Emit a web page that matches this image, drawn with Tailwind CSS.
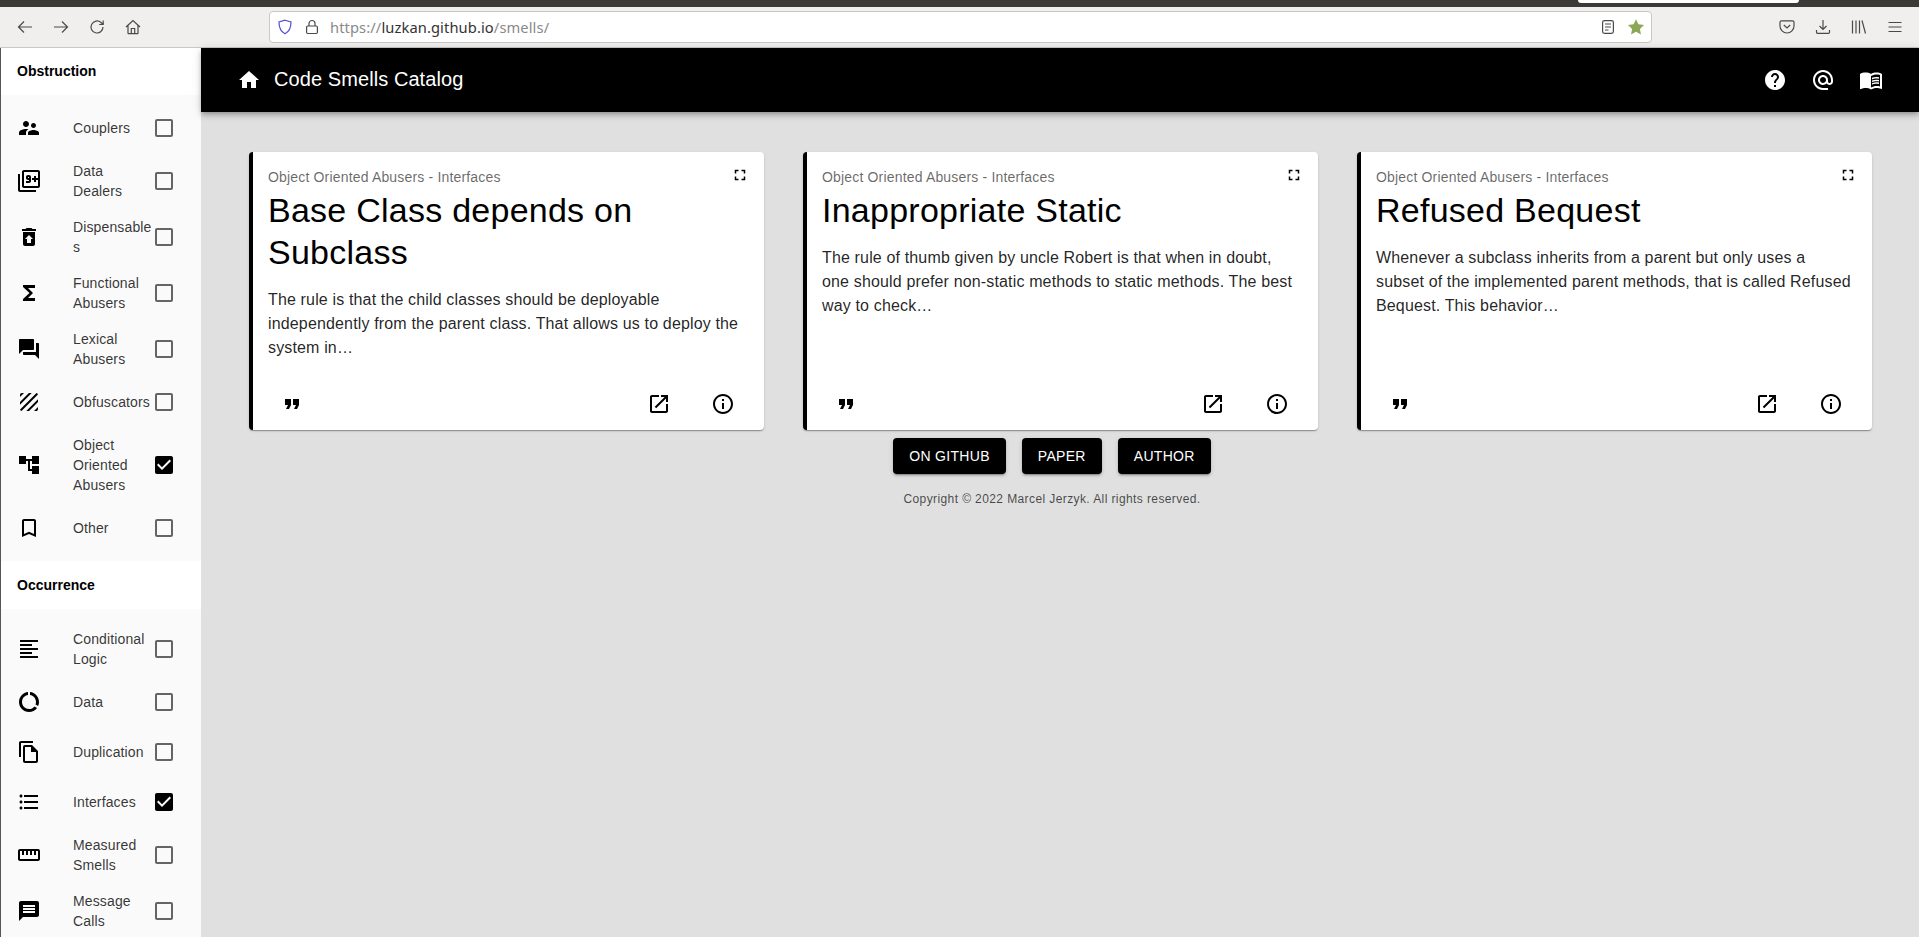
<!DOCTYPE html>
<html lang="en">
<head>
<meta charset="UTF-8" />
<title>Code Smells Catalog</title>
<script src="https://cdn.jsdelivr.net/npm/@tailwindcss/browser@4"></script>
</head>
<body class="h-screen overflow-hidden flex flex-col bg-[#e0e0e0] font-['Liberation_Sans',Arial,sans-serif]">

  <!-- Browser chrome -->
  <div class="h-[7px] shrink-0 bg-[#3c3a36] flex pl-[1578px]">
    <div class="w-[221px] h-[3px] bg-white rounded-b-[3px]"></div>
  </div>
  <div class="h-[41px] shrink-0 bg-[#f0efed] border-b border-[#c8c8c8] flex items-center text-[#4a4a4a]">
    <div class="flex items-center gap-[20px] pl-[17px] w-[269px]">
      <svg class="w-4 h-4" viewBox="0 0 16 16" fill="none" stroke="currentColor" stroke-width="1.2"><path d="M15 8H1.5M7 2.5 1.5 8 7 13.5"/></svg>
      <svg class="w-4 h-4" viewBox="0 0 16 16" fill="none" stroke="currentColor" stroke-width="1.2"><path d="M1 8h13.5M9 2.5 14.5 8 9 13.5"/></svg>
      <svg class="w-4 h-4" viewBox="0 0 16 16" fill="none" stroke="currentColor" stroke-width="1.2"><path d="M14 8a6 6 0 1 1-2-4.5L14 5.5M14.2 1.5v4h-4"/></svg>
      <svg class="w-4 h-4" viewBox="0 0 16 16" fill="none" stroke="currentColor" stroke-width="1.2"><path d="M1 8 8 1.5 15 8M3 6.5V14a.7.7 0 0 0 .7.7h8.6A.7.7 0 0 0 13 14V6.5M6.3 14.5V9.5h3.4v5"/></svg>
    </div>
    <div class="w-[1383px] h-[32px] bg-white border border-[#c8c8c8] rounded-[4px] flex items-center pl-[7px] pr-[6px]">
      <svg class="w-4 h-4 text-[#4f4fd8]" viewBox="0 0 16 16" fill="none" stroke="currentColor" stroke-width="1.2"><path d="M8 1.2 14 3c0 6-1.5 9.5-6 11.8C3.5 12.5 2 9 2 3z"/></svg>
      <svg class="w-4 h-4 ml-[11px]" viewBox="0 0 16 16" fill="none" stroke="currentColor" stroke-width="1.2"><rect x="2.6" y="7" width="10.8" height="7.5" rx="1.2"/><path d="M5 7V4.5a3 3 0 0 1 6 0V7"/></svg>
      <span class="ml-[10px] text-[14.7px] font-['Noto_Sans',sans-serif] text-[#8a8a8a] tracking-[0.1px]">https://<span class="text-[#333]">luzkan.github.io</span>/smells/</span>
      <svg class="w-4 h-4 ml-auto" viewBox="0 0 16 16" fill="none" stroke="currentColor" stroke-width="1.2"><rect x="2.6" y="1.6" width="10.8" height="12.8" rx="1.8"/><path d="M5 5h6M5 8h6M5 11h3.5"/></svg>
      <svg class="w-[18px] h-[18px] ml-[11px] text-[#8aa856]" viewBox="0 0 24 24" fill="currentColor"><path d="M12 1.5l3.2 6.9 7.5.9-5.5 5.2 1.4 7.5L12 18.3l-6.6 3.7 1.4-7.5L1.3 9.3l7.5-.9z"/></svg>
    </div>
    <div class="flex items-center gap-[20px] ml-[127px]">
      <svg class="w-4 h-4" viewBox="0 0 16 16" fill="none" stroke="currentColor" stroke-width="1.2"><path d="M2.5 1.8h11A1.5 1.5 0 0 1 15 3.3V7A7 7 0 0 1 1 7V3.3a1.5 1.5 0 0 1 1.5-1.5zM4.8 6 8 9l3.2-3"/></svg>
      <svg class="w-4 h-4" viewBox="0 0 16 16" fill="none" stroke="currentColor" stroke-width="1.2"><path d="M8 1v9.5M4.5 7 8 10.5 11.5 7M1.5 11v2.3a1 1 0 0 0 1 1h11a1 1 0 0 0 1-1V11"/></svg>
      <svg class="w-4 h-4" viewBox="0 0 16 16" fill="none" stroke="currentColor" stroke-width="1.2"><path d="M1.5 1.5v13M5 1.5v13M8.5 1.5v13M11 1.5l3.5 13"/></svg>
      <svg class="w-4 h-4" viewBox="0 0 16 16" fill="none" stroke="currentColor" stroke-width="1.2"><path d="M1.5 3.5h13M1.5 8h13M1.5 12.5h13"/></svg>
    </div>
  </div>

  <!-- Page -->
  <div class="flex-1 min-h-0 flex border-l border-[#555]">

    <!-- Sidebar -->
    <aside class="w-[200px] shrink-0 bg-white overflow-hidden text-[14px] leading-[20px] tracking-[0.13px] text-black/80">
      <h2 class="h-[47px] flex items-center pl-[16px] pb-[2px] font-bold text-black tracking-normal">Obstruction</h2>
      <ul class="bg-[#fafafa] py-2">
        <li class="min-h-[50px] py-2 pl-[16px] flex items-center">
          <svg class="w-6 h-6 mr-[32px] shrink-0" viewBox="0 0 24 24"><path d="M16.5 12c1.38 0 2.49-1.12 2.49-2.5S17.88 7 16.5 7C15.12 7 14 8.12 14 9.5s1.12 2.5 2.5 2.5zM9 11c1.66 0 2.99-1.34 2.99-3S10.66 5 9 5C7.34 5 6 6.34 6 8s1.34 3 3 3zm7.5 3c-1.83 0-5.5.92-5.5 2.75V19h11v-2.25c0-1.83-3.67-2.75-5.5-2.75zM9 13c-2.33 0-7 1.17-7 3.5V19h7v-2.25c0-.85.33-2.34 2.37-3.47C10.5 13.1 9.66 13 9 13z"/></svg>
          <span class="w-[79px] [overflow-wrap:anywhere]">Couplers</span>
          <svg class="w-6 h-6 shrink-0 text-black/60" viewBox="0 0 24 24" fill="currentColor"><path d="M19 5v14H5V5h14m0-2H5c-1.1 0-2 .9-2 2v14c0 1.1.9 2 2 2h14c1.1 0 2-.9 2-2V5c0-1.1-.9-2-2-2z"/></svg>
        </li>
        <li class="min-h-[50px] py-2 pl-[16px] flex items-center">
          <svg class="w-6 h-6 mr-[32px] shrink-0" viewBox="0 0 24 24"><path d="M3 5H1v16c0 1.1.9 2 2 2h16v-2H3V5zm11 7V8c0-1.1-.9-2-2-2h-1c-1.1 0-2 .9-2 2v1c0 1.1.9 2 2 2h1v1H9v2h3c1.1 0 2-.9 2-2zm-3-3V8h1v1h-1zm10-8H7c-1.1 0-2 .9-2 2v14c0 1.1.9 2 2 2h14c1.1 0 2-.9 2-2V3c0-1.1-.9-2-2-2zm0 8h-2V7h-2v2h-2v2h2v2h2v-2h2v6H7V3h14v6z"/></svg>
          <span class="w-[79px] [overflow-wrap:anywhere]">Data Dealers</span>
          <svg class="w-6 h-6 shrink-0 text-black/60" viewBox="0 0 24 24" fill="currentColor"><path d="M19 5v14H5V5h14m0-2H5c-1.1 0-2 .9-2 2v14c0 1.1.9 2 2 2h14c1.1 0 2-.9 2-2V5c0-1.1-.9-2-2-2z"/></svg>
        </li>
        <li class="min-h-[50px] py-2 pl-[16px] flex items-center">
          <svg class="w-6 h-6 mr-[32px] shrink-0" viewBox="0 0 24 24"><path d="M19 4h-3.5l-1-1h-5l-1 1H5v2h14zM6 7v12c0 1.1.9 2 2 2h8c1.1 0 2-.9 2-2V7H6zm8 7v4h-4v-4H8l4-4 4 4h-2z"/></svg>
          <span class="w-[79px] [overflow-wrap:anywhere]">Dispensables</span>
          <svg class="w-6 h-6 shrink-0 text-black/60" viewBox="0 0 24 24" fill="currentColor"><path d="M19 5v14H5V5h14m0-2H5c-1.1 0-2 .9-2 2v14c0 1.1.9 2 2 2h14c1.1 0 2-.9 2-2V5c0-1.1-.9-2-2-2z"/></svg>
        </li>
        <li class="min-h-[50px] py-2 pl-[16px] flex items-center">
          <svg class="w-6 h-6 mr-[32px] shrink-0" viewBox="0 0 24 24"><path d="M18 4H6v2l6.5 6L6 18v2h12v-3h-7l5-5-5-5h7z"/></svg>
          <span class="w-[79px] [overflow-wrap:anywhere]">Functional Abusers</span>
          <svg class="w-6 h-6 shrink-0 text-black/60" viewBox="0 0 24 24" fill="currentColor"><path d="M19 5v14H5V5h14m0-2H5c-1.1 0-2 .9-2 2v14c0 1.1.9 2 2 2h14c1.1 0 2-.9 2-2V5c0-1.1-.9-2-2-2z"/></svg>
        </li>
        <li class="min-h-[50px] py-2 pl-[16px] flex items-center">
          <svg class="w-6 h-6 mr-[32px] shrink-0" viewBox="0 0 24 24"><path d="M21 6h-2v9H6v2c0 .55.45 1 1 1h11l4 4V7c0-.55-.45-1-1-1zm-4 6V3c0-.55-.45-1-1-1H3c-.55 0-1 .45-1 1v14l4-4h10c.55 0 1-.45 1-1z"/></svg>
          <span class="w-[79px] [overflow-wrap:anywhere]">Lexical Abusers</span>
          <svg class="w-6 h-6 shrink-0 text-black/60" viewBox="0 0 24 24" fill="currentColor"><path d="M19 5v14H5V5h14m0-2H5c-1.1 0-2 .9-2 2v14c0 1.1.9 2 2 2h14c1.1 0 2-.9 2-2V5c0-1.1-.9-2-2-2z"/></svg>
        </li>
        <li class="min-h-[50px] py-2 pl-[16px] flex items-center">
          <svg class="w-6 h-6 mr-[32px] shrink-0" viewBox="0 0 24 24"><path d="M19.51 3.08L3.08 19.51c.09.34.27.65.51.9.25.24.56.42.9.51L20.93 4.49c-.19-.69-.73-1.23-1.42-1.41zM11.88 3L3 11.88v2.83L14.71 3h-2.83zM5 3c-1.1 0-2 .9-2 2v2l4-4H5zm14 18c.55 0 1.05-.22 1.41-.59.37-.36.59-.86.59-1.41v-2l-4 4h2zm-9.71 0h2.83L21 12.12V9.29L9.29 21z"/></svg>
          <span class="w-[79px] [overflow-wrap:anywhere]">Obfuscators</span>
          <svg class="w-6 h-6 shrink-0 text-black/60" viewBox="0 0 24 24" fill="currentColor"><path d="M19 5v14H5V5h14m0-2H5c-1.1 0-2 .9-2 2v14c0 1.1.9 2 2 2h14c1.1 0 2-.9 2-2V5c0-1.1-.9-2-2-2z"/></svg>
        </li>
        <li class="min-h-[50px] py-2 pl-[16px] flex items-center">
          <svg class="w-6 h-6 mr-[32px] shrink-0" viewBox="0 0 24 24"><path d="M22 11V3h-7v3H9V3H2v8h7V8h2v10h4v3h7v-8h-7v3h-2V8h2v3z"/></svg>
          <span class="w-[79px] [overflow-wrap:anywhere]">Object Oriented Abusers</span>
          <svg class="w-6 h-6 shrink-0 text-black" viewBox="0 0 24 24" fill="currentColor"><path d="M19 3H5c-1.11 0-2 .9-2 2v14c0 1.1.89 2 2 2h14c1.11 0 2-.9 2-2V5c0-1.1-.89-2-2-2zm-9 14l-5-5 1.41-1.41L10 14.17l7.59-7.59L19 8l-9 9z"/></svg>
        </li>
        <li class="min-h-[50px] py-2 pl-[16px] flex items-center">
          <svg class="w-6 h-6 mr-[32px] shrink-0" viewBox="0 0 24 24"><path d="M17 3H7c-1.1 0-1.99.9-1.99 2L5 21l7-3 7 3V5c0-1.1-.9-2-2-2zm0 15l-5-2.18L7 18V5h10v13z"/></svg>
          <span class="w-[79px] [overflow-wrap:anywhere]">Other</span>
          <svg class="w-6 h-6 shrink-0 text-black/60" viewBox="0 0 24 24" fill="currentColor"><path d="M19 5v14H5V5h14m0-2H5c-1.1 0-2 .9-2 2v14c0 1.1.9 2 2 2h14c1.1 0 2-.9 2-2V5c0-1.1-.9-2-2-2z"/></svg>
        </li>
      </ul>
      <h2 class="h-[48px] flex items-center pl-[16px] font-bold text-black tracking-normal">Occurrence</h2>
      <ul class="bg-[#fafafa] pt-[12px] pb-2">
        <li class="min-h-[50px] py-2 pl-[16px] flex items-center">
          <svg class="w-6 h-6 mr-[32px] shrink-0" viewBox="0 0 24 24"><path d="M15 15H3v2h12v-2zm0-8H3v2h12V7zM3 13h18v-2H3v2zm0 8h18v-2H3v2zM3 3v2h18V3H3z"/></svg>
          <span class="w-[79px] [overflow-wrap:anywhere]">Conditional Logic</span>
          <svg class="w-6 h-6 shrink-0 text-black/60" viewBox="0 0 24 24" fill="currentColor"><path d="M19 5v14H5V5h14m0-2H5c-1.1 0-2 .9-2 2v14c0 1.1.9 2 2 2h14c1.1 0 2-.9 2-2V5c0-1.1-.9-2-2-2z"/></svg>
        </li>
        <li class="min-h-[50px] py-2 pl-[16px] flex items-center">
          <svg class="w-6 h-6 mr-[32px] shrink-0" viewBox="0 0 24 24"><path d="M13 2.05v3.03c3.39.49 6 3.39 6 6.92 0 .9-.18 1.75-.48 2.54l2.6 1.53c.56-1.24.88-2.62.88-4.07 0-5.18-3.95-9.45-9-9.95zM12 19c-3.87 0-7-3.13-7-7 0-3.53 2.61-6.43 6-6.92V2.05c-5.06.5-9 4.76-9 9.95 0 5.52 4.47 10 9.99 10 3.31 0 6.24-1.61 8.06-4.09l-2.6-1.53C16.17 17.98 14.21 19 12 19z"/></svg>
          <span class="w-[79px] [overflow-wrap:anywhere]">Data</span>
          <svg class="w-6 h-6 shrink-0 text-black/60" viewBox="0 0 24 24" fill="currentColor"><path d="M19 5v14H5V5h14m0-2H5c-1.1 0-2 .9-2 2v14c0 1.1.9 2 2 2h14c1.1 0 2-.9 2-2V5c0-1.1-.9-2-2-2z"/></svg>
        </li>
        <li class="min-h-[50px] py-2 pl-[16px] flex items-center">
          <svg class="w-6 h-6 mr-[32px] shrink-0" viewBox="0 0 24 24"><path d="M16 1H4c-1.1 0-2 .9-2 2v14h2V3h12V1zm-1 4H8c-1.1 0-1.99.9-1.99 2L6 21c0 1.1.89 2 1.99 2H19c1.1 0 2-.9 2-2V11l-6-6zM8 21V7h6v5h5v9H8z"/></svg>
          <span class="w-[79px] [overflow-wrap:anywhere]">Duplication</span>
          <svg class="w-6 h-6 shrink-0 text-black/60" viewBox="0 0 24 24" fill="currentColor"><path d="M19 5v14H5V5h14m0-2H5c-1.1 0-2 .9-2 2v14c0 1.1.9 2 2 2h14c1.1 0 2-.9 2-2V5c0-1.1-.9-2-2-2z"/></svg>
        </li>
        <li class="min-h-[50px] py-2 pl-[16px] flex items-center">
          <svg class="w-6 h-6 mr-[32px] shrink-0" viewBox="0 0 24 24"><path d="M4 10.5c-.83 0-1.5.67-1.5 1.5s.67 1.5 1.5 1.5 1.5-.67 1.5-1.5-.67-1.5-1.5-1.5zm0-6c-.83 0-1.5.67-1.5 1.5S3.17 7.5 4 7.5 5.5 6.83 5.5 6 4.83 4.5 4 4.5zm0 12c-.83 0-1.5.68-1.5 1.5s.68 1.5 1.5 1.5 1.5-.68 1.5-1.5-.67-1.5-1.5-1.5zM7 19h14v-2H7v2zm0-6h14v-2H7v2zm0-8v2h14V5H7z"/></svg>
          <span class="w-[79px] [overflow-wrap:anywhere]">Interfaces</span>
          <svg class="w-6 h-6 shrink-0 text-black" viewBox="0 0 24 24" fill="currentColor"><path d="M19 3H5c-1.11 0-2 .9-2 2v14c0 1.1.89 2 2 2h14c1.11 0 2-.9 2-2V5c0-1.1-.89-2-2-2zm-9 14l-5-5 1.41-1.41L10 14.17l7.59-7.59L19 8l-9 9z"/></svg>
        </li>
        <li class="min-h-[50px] py-2 pl-[16px] flex items-center">
          <svg class="w-6 h-6 mr-[32px] shrink-0" viewBox="0 0 24 24"><path d="M21 6H3c-1.1 0-2 .9-2 2v8c0 1.1.9 2 2 2h18c1.1 0 2-.9 2-2V8c0-1.1-.9-2-2-2zm0 10H3V8h2v4h2V8h2v4h2V8h2v4h2V8h2v4h2V8h2v8z"/></svg>
          <span class="w-[79px] [overflow-wrap:anywhere]">Measured Smells</span>
          <svg class="w-6 h-6 shrink-0 text-black/60" viewBox="0 0 24 24" fill="currentColor"><path d="M19 5v14H5V5h14m0-2H5c-1.1 0-2 .9-2 2v14c0 1.1.9 2 2 2h14c1.1 0 2-.9 2-2V5c0-1.1-.9-2-2-2z"/></svg>
        </li>
        <li class="min-h-[50px] py-2 pl-[16px] flex items-center">
          <svg class="w-6 h-6 mr-[32px] shrink-0" viewBox="0 0 24 24"><path d="M20 2H4c-1.1 0-1.99.9-1.99 2L2 22l4-4h14c1.1 0 2-.9 2-2V4c0-1.1-.9-2-2-2zm-2 12H6v-2h12v2zm0-3H6V9h12v2zm0-3H6V6h12v2z"/></svg>
          <span class="w-[79px] [overflow-wrap:anywhere]">Message Calls</span>
          <svg class="w-6 h-6 shrink-0 text-black/60" viewBox="0 0 24 24" fill="currentColor"><path d="M19 5v14H5V5h14m0-2H5c-1.1 0-2 .9-2 2v14c0 1.1.9 2 2 2h14c1.1 0 2-.9 2-2V5c0-1.1-.9-2-2-2z"/></svg>
        </li>
      </ul>
    </aside>

    <!-- Main -->
    <main class="flex-1 min-w-0 flex flex-col">
      <header class="h-[64px] shrink-0 bg-black text-white flex items-center px-[24px] shadow-[0_2px_4px_-1px_rgba(0,0,0,.2),0_4px_5px_0_rgba(0,0,0,.14),0_1px_10px_0_rgba(0,0,0,.12)]">
        <svg class="w-6 h-6 fill-white mx-3" viewBox="0 0 24 24"><path d="M10 20v-6h4v6h5v-8h3L12 3 2 12h3v8z"/></svg>
        <span class="text-[20px] tracking-[0.08px] pb-[2px] pl-px">Code Smells Catalog</span>
        <div class="ml-auto flex gap-[24px] pr-3">
          <svg class="w-6 h-6 fill-white" viewBox="0 0 24 24"><path d="M12 2C6.48 2 2 6.48 2 12s4.48 10 10 10 10-4.48 10-10S17.52 2 12 2zm1 17h-2v-2h2v2zm2.07-7.75l-.9.92C13.45 12.9 13 13.5 13 15h-2v-.5c0-1.1.45-2.1 1.17-2.83l1.24-1.26c.37-.36.59-.86.59-1.41 0-1.1-.9-2-2-2s-2 .9-2 2H8c0-2.21 1.79-4 4-4s4 1.79 4 4c0 .88-.36 1.68-.93 2.25z"/></svg>
          <svg class="w-6 h-6 fill-white" viewBox="0 0 24 24"><path d="M12 2C6.48 2 2 6.48 2 12s4.48 10 10 10h5v-2h-5c-4.34 0-8-3.66-8-8s3.66-8 8-8 8 3.66 8 8v1.43c0 .79-.71 1.57-1.5 1.57s-1.5-.78-1.5-1.57V12c0-2.76-2.24-5-5-5s-5 2.24-5 5 2.24 5 5 5c1.38 0 2.64-.56 3.54-1.47.65.89 1.77 1.47 2.96 1.47 1.97 0 3.5-1.6 3.5-3.57V12c0-5.52-4.48-10-10-10zm0 13c-1.66 0-3-1.34-3-3s1.34-3 3-3 3 1.34 3 3-1.34 3-3 3z"/></svg>
          <svg class="w-6 h-6 fill-white" viewBox="0 0 24 24"><path d="M21 5c-1.11-.35-2.33-.5-3.5-.5-1.95 0-4.05.4-5.5 1.5-1.45-1.1-3.55-1.5-5.5-1.5S2.45 4.9 1 6v14.65c0 .25.25.5.5.5.1 0 .15-.05.25-.05C3.1 20.45 5.05 20 6.5 20c1.95 0 4.05.4 5.5 1.5 1.35-.85 3.8-1.5 5.5-1.5 1.65 0 3.35.3 4.75 1.05.1.05.15.05.25.05.25 0 .5-.25.5-.5V6c-.6-.45-1.25-.75-2-1zm0 13.5c-1.1-.35-2.3-.5-3.5-.5-1.7 0-4.15.65-5.5 1.5V8c1.35-.85 3.8-1.5 5.5-1.5 1.2 0 2.4.15 3.5.5v11.5z"/><path d="M17.5 10.5c.88 0 1.73.09 2.5.26V9.24c-.79-.15-1.64-.24-2.5-.24-1.7 0-3.24.29-4.5.83v1.66c1.13-.64 2.7-.99 4.5-.99zM13 12.49v1.66c1.13-.64 2.7-.99 4.5-.99.88 0 1.73.09 2.5.26V11.9c-.79-.15-1.64-.24-2.5-.24-1.7 0-3.24.3-4.5.83zM17.5 14.33c-1.7 0-3.24.29-4.5.83v1.66c1.13-.64 2.7-.99 4.5-.99.88 0 1.73.09 2.5.26v-1.52c-.79-.16-1.64-.24-2.5-.24z"/></svg>
        </div>
      </header>

      <section class="grid grid-cols-3 gap-[39px] pl-[48px] pr-[47px] pt-[40px]">
        <article class="h-[278px] relative flex flex-col bg-white border-l-4 border-black rounded-[4px] shadow-[0_2px_1px_-1px_rgba(0,0,0,.2),0_1px_1px_0_rgba(0,0,0,.14),0_1px_3px_0_rgba(0,0,0,.12)] pl-[15px] pr-[16px] pt-[15px]">
          <svg class="absolute right-[15px] top-[14px] w-[18px] h-[18px]" viewBox="0 0 24 24"><path d="M7 14H5v5h5v-2H7v-3zm-2-4h2V7h3V5H5v5zm12 7h-3v2h5v-5h-2v3zM14 5v2h3v3h2V5h-5z"/></svg>
          <p class="text-[14px] leading-[20px] tracking-[0.17px] text-black/60">Object Oriented Abusers - Interfaces</p>
          <h3 class="text-[34px] leading-[42px] tracking-[0.25px] text-black mt-[2px] mb-[15px]">Base Class depends on Subclass</h3>
          <p class="text-[16px] leading-[24px] tracking-[0.15px] text-black/87">The rule is that the child classes should be deployable independently from the parent class. That allows us to deploy the system in…</p>
          <div class="mt-auto h-[52px] flex items-center gap-[40px] pl-[12px] pr-[13px]">
            <svg class="w-6 h-6 mr-auto" viewBox="0 0 24 24"><path d="M6 17h3l2-4V7H5v6h3zm8 0h3l2-4V7h-6v6h3z"/></svg>
            <svg class="w-6 h-6" viewBox="0 0 24 24"><path d="M19 19H5V5h7V3H5c-1.11 0-2 .9-2 2v14c0 1.1.89 2 2 2h14c1.1 0 2-.9 2-2v-7h-2v7zM14 3v2h3.59l-9.83 9.83 1.41 1.41L19 6.41V10h2V3h-7z"/></svg>
            <svg class="w-6 h-6" viewBox="0 0 24 24"><path d="M11 7h2v2h-2zm0 4h2v6h-2zm1-9C6.48 2 2 6.48 2 12s4.48 10 10 10 10-4.48 10-10S17.52 2 12 2zm0 18c-4.41 0-8-3.59-8-8s3.59-8 8-8 8 3.59 8 8-3.59 8-8 8z"/></svg>
          </div>
        </article>
        <article class="h-[278px] relative flex flex-col bg-white border-l-4 border-black rounded-[4px] shadow-[0_2px_1px_-1px_rgba(0,0,0,.2),0_1px_1px_0_rgba(0,0,0,.14),0_1px_3px_0_rgba(0,0,0,.12)] pl-[15px] pr-[16px] pt-[15px]">
          <svg class="absolute right-[15px] top-[14px] w-[18px] h-[18px]" viewBox="0 0 24 24"><path d="M7 14H5v5h5v-2H7v-3zm-2-4h2V7h3V5H5v5zm12 7h-3v2h5v-5h-2v3zM14 5v2h3v3h2V5h-5z"/></svg>
          <p class="text-[14px] leading-[20px] tracking-[0.17px] text-black/60">Object Oriented Abusers - Interfaces</p>
          <h3 class="text-[34px] leading-[42px] tracking-[0.25px] text-black mt-[2px] mb-[15px]">Inappropriate Static</h3>
          <p class="text-[16px] leading-[24px] tracking-[0.15px] text-black/87">The rule of thumb given by uncle Robert is that when in doubt, one should prefer non-static methods to static methods. The best way to check…</p>
          <div class="mt-auto h-[52px] flex items-center gap-[40px] pl-[12px] pr-[13px]">
            <svg class="w-6 h-6 mr-auto" viewBox="0 0 24 24"><path d="M6 17h3l2-4V7H5v6h3zm8 0h3l2-4V7h-6v6h3z"/></svg>
            <svg class="w-6 h-6" viewBox="0 0 24 24"><path d="M19 19H5V5h7V3H5c-1.11 0-2 .9-2 2v14c0 1.1.89 2 2 2h14c1.1 0 2-.9 2-2v-7h-2v7zM14 3v2h3.59l-9.83 9.83 1.41 1.41L19 6.41V10h2V3h-7z"/></svg>
            <svg class="w-6 h-6" viewBox="0 0 24 24"><path d="M11 7h2v2h-2zm0 4h2v6h-2zm1-9C6.48 2 2 6.48 2 12s4.48 10 10 10 10-4.48 10-10S17.52 2 12 2zm0 18c-4.41 0-8-3.59-8-8s3.59-8 8-8 8 3.59 8 8-3.59 8-8 8z"/></svg>
          </div>
        </article>
        <article class="h-[278px] relative flex flex-col bg-white border-l-4 border-black rounded-[4px] shadow-[0_2px_1px_-1px_rgba(0,0,0,.2),0_1px_1px_0_rgba(0,0,0,.14),0_1px_3px_0_rgba(0,0,0,.12)] pl-[15px] pr-[16px] pt-[15px]">
          <svg class="absolute right-[15px] top-[14px] w-[18px] h-[18px]" viewBox="0 0 24 24"><path d="M7 14H5v5h5v-2H7v-3zm-2-4h2V7h3V5H5v5zm12 7h-3v2h5v-5h-2v3zM14 5v2h3v3h2V5h-5z"/></svg>
          <p class="text-[14px] leading-[20px] tracking-[0.17px] text-black/60">Object Oriented Abusers - Interfaces</p>
          <h3 class="text-[34px] leading-[42px] tracking-[0.25px] text-black mt-[2px] mb-[15px]">Refused Bequest</h3>
          <p class="text-[16px] leading-[24px] tracking-[0.15px] text-black/87">Whenever a subclass inherits from a parent but only uses a subset of the implemented parent methods, that is called Refused Bequest. This behavior…</p>
          <div class="mt-auto h-[52px] flex items-center gap-[40px] pl-[12px] pr-[13px]">
            <svg class="w-6 h-6 mr-auto" viewBox="0 0 24 24"><path d="M6 17h3l2-4V7H5v6h3zm8 0h3l2-4V7h-6v6h3z"/></svg>
            <svg class="w-6 h-6" viewBox="0 0 24 24"><path d="M19 19H5V5h7V3H5c-1.11 0-2 .9-2 2v14c0 1.1.89 2 2 2h14c1.1 0 2-.9 2-2v-7h-2v7zM14 3v2h3.59l-9.83 9.83 1.41 1.41L19 6.41V10h2V3h-7z"/></svg>
            <svg class="w-6 h-6" viewBox="0 0 24 24"><path d="M11 7h2v2h-2zm0 4h2v6h-2zm1-9C6.48 2 2 6.48 2 12s4.48 10 10 10 10-4.48 10-10S17.52 2 12 2zm0 18c-4.41 0-8-3.59-8-8s3.59-8 8-8 8 3.59 8 8-3.59 8-8 8z"/></svg>
          </div>
        </article>
      </section>

      <footer class="pr-[16px] pt-[8px] flex flex-col items-center">
        <div class="flex gap-[16px]">
          <a class="h-[36px] px-[16px] flex items-center bg-black text-white text-[14px] tracking-[0.3px] rounded-[4px] shadow-[0_3px_1px_-2px_rgba(0,0,0,.2),0_2px_2px_0_rgba(0,0,0,.14),0_1px_5px_0_rgba(0,0,0,.12)]">ON GITHUB</a>
          <a class="h-[36px] px-[16px] flex items-center bg-black text-white text-[14px] tracking-[0.3px] rounded-[4px] shadow-[0_3px_1px_-2px_rgba(0,0,0,.2),0_2px_2px_0_rgba(0,0,0,.14),0_1px_5px_0_rgba(0,0,0,.12)]">PAPER</a>
          <a class="h-[36px] px-[16px] flex items-center bg-black text-white text-[14px] tracking-[0.3px] rounded-[4px] shadow-[0_3px_1px_-2px_rgba(0,0,0,.2),0_2px_2px_0_rgba(0,0,0,.14),0_1px_5px_0_rgba(0,0,0,.12)]">AUTHOR</a>
        </div>
        <p class="mt-[16px] text-[12px] leading-[18px] tracking-[0.4px] text-black/70">Copyright © 2022 Marcel Jerzyk. All rights reserved.</p>
      </footer>
    </main>
  </div>
</body>
</html>
